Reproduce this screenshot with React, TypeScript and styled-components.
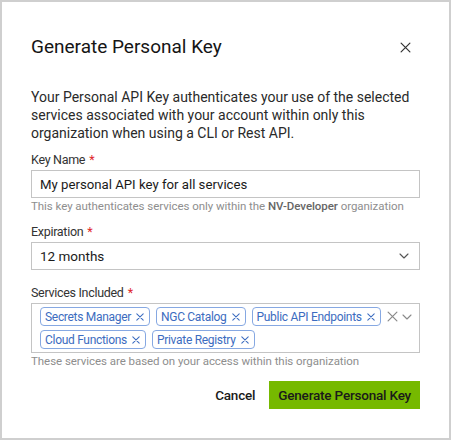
import styled, { createGlobalStyle } from "styled-components";

const GlobalStyle = createGlobalStyle`
  html, body {
    margin: 0;
    padding: 0;
    background: #ffffff;
  }
  * {
    box-sizing: border-box;
  }
`;

const Dialog = styled.div`
  width: 451px;
  height: 440px;
  border: 2px solid #cfcfcf;
  background: #ffffff;
  padding: 33px 29px 0 29px;
  font-family: Roboto, "Noto Sans", sans-serif;
  color: #1a1a1a;
  display: flex;
  flex-direction: column;
`;

const Header = styled.div`
  display: flex;
  align-items: center;
  justify-content: space-between;
  height: 24px;
`;

const Title = styled.h2`
  margin: 0;
  font-size: 19px;
  font-weight: 400;
  line-height: 24px;
  color: #151515;
`;

const CloseButton = styled.button`
  border: none;
  background: none;
  padding: 0;
  margin-right: 9px;
  width: 12px;
  height: 12px;
  display: flex;
  align-items: center;
  justify-content: center;
  cursor: pointer;
`;

const Intro = styled.p`
  margin: 29px 0 0 0;
  font-size: 14px;
  line-height: 18px;
  color: #2a2a2a;
`;

const Field = styled.div<{ $top: number }>`
  display: flex;
  flex-direction: column;
  margin-top: ${(p) => p.$top}px;
`;

const Label = styled.label`
  font-size: 12.5px;
  line-height: 16px;
  letter-spacing: -0.3px;
  color: #333;
  margin-bottom: 2px;
`;

const Required = styled.span`
  color: #e0262b;
  margin-left: 4px;
`;

const TextInput = styled.input`
  height: 28px;
  width: 100%;
  border: 1px solid #c4c4c4;
  padding: 0 8px;
  font-family: inherit;
  font-size: 13.2px;
  color: #1a1a1a;
  outline: none;
`;

const SelectBox = styled.div`
  height: 28px;
  border: 1px solid #c4c4c4;
  padding: 0 10px 0 8px;
  display: flex;
  align-items: center;
  justify-content: space-between;
  font-size: 13.5px;
`;

const Helper = styled.div`
  font-size: 11.5px;
  line-height: 16px;
  letter-spacing: -0.05px;
  color: #8e8e8e;
  white-space: nowrap;

  & b {
    color: #666;
    font-weight: 500;
  }
`;

const MultiBox = styled.div`
  border: 1px solid #c4c4c4;
  min-height: 50px;
  padding: 3px 6px 3px 8px;
  display: flex;
  align-items: flex-start;
`;

const TagList = styled.div`
  flex: 1;
  display: flex;
  flex-wrap: wrap;
  gap: 4px 6px;
`;

const Tag = styled.span`
  height: 19px;
  display: inline-flex;
  align-items: center;
  gap: 5px;
  padding: 0 5px 0 4px;
  border: 1px solid #86a8e2;
  border-radius: 4px;
  color: #3c6cc0;
  font-size: 12px;
  letter-spacing: -0.3px;
  white-space: nowrap;
`;

const Indicators = styled.div`
  flex: none;
  display: flex;
  align-items: center;
  gap: 4px;
  height: 19px;
  margin-left: 2px;
  margin-right: 1px;
`;

const Footer = styled.div`
  display: flex;
  justify-content: flex-end;
  align-items: center;
  gap: 14px;
  margin-top: 12px;
`;

const Button = styled.button<{ $primary?: boolean }>`
  height: 28px;
  border: none;
  padding: 0 ${(p) => (p.$primary ? 9 : 0)}px;
  font-family: inherit;
  font-size: 13.5px;
  letter-spacing: -0.2px;
  font-weight: 500;
  color: #1a1a1a;
  background: ${(p) => (p.$primary ? "#76b900" : "transparent")};
  cursor: pointer;
`;

function Cross({ size, color, weight = 1.1 }: { size: number; color: string; weight?: number }) {
  return (
    <svg width={size} height={size} viewBox="0 0 10 10" fill="none">
      <path d="M1 1L9 9M9 1L1 9" stroke={color} strokeWidth={weight} strokeLinecap="round" />
    </svg>
  );
}

function Chevron({ color = "#555" }: { color?: string }) {
  return (
    <svg width="10" height="6" viewBox="0 0 10 6" fill="none">
      <path d="M1 1L5 5L9 1" stroke={color} strokeWidth="1.1" strokeLinecap="round" strokeLinejoin="round" />
    </svg>
  );
}

const services = [
  "Secrets Manager",
  "NGC Catalog",
  "Public API Endpoints",
  "Cloud Functions",
  "Private Registry",
];

export default function App() {
  return (
    <>
      <GlobalStyle />
      <Dialog>
        <Header>
          <Title>Generate Personal Key</Title>
          <CloseButton aria-label="Close">
            <Cross size={11} color="#333" />
          </CloseButton>
        </Header>
        <Intro>
          Your Personal API Key authenticates your use of the selected services associated with
          your account within only this organization when using a CLI or Rest API.
        </Intro>

        <Field $top={10}>
          <Label htmlFor="keyName">
            Key Name<Required>*</Required>
          </Label>
          <TextInput id="keyName" defaultValue="My personal API key for all services" />
          <Helper>
            This key authenticates services only within the <b>NV-Developer</b> organization
          </Helper>
        </Field>

        <Field $top={10}>
          <Label>
            Expiration<Required>*</Required>
          </Label>
          <SelectBox>
            <span>12 months</span>
            <Chevron />
          </SelectBox>
        </Field>

        <Field $top={15}>
          <Label>
            Services Included<Required>*</Required>
          </Label>
          <MultiBox>
            <TagList>
              {services.map((s) => (
                <Tag key={s}>
                  {s}
                  <Cross size={8} color="#3c6cc0" weight={1.3} />
                </Tag>
              ))}
            </TagList>
            <Indicators>
              <Cross size={11} color="#8a8a8a" />
              <Chevron color="#8a8a8a" />
            </Indicators>
          </MultiBox>
          <Helper>These services are based on your access within this organization</Helper>
        </Field>

        <Footer>
          <Button>Cancel</Button>
          <Button $primary>Generate Personal Key</Button>
        </Footer>
      </Dialog>
    </>
  );
}
